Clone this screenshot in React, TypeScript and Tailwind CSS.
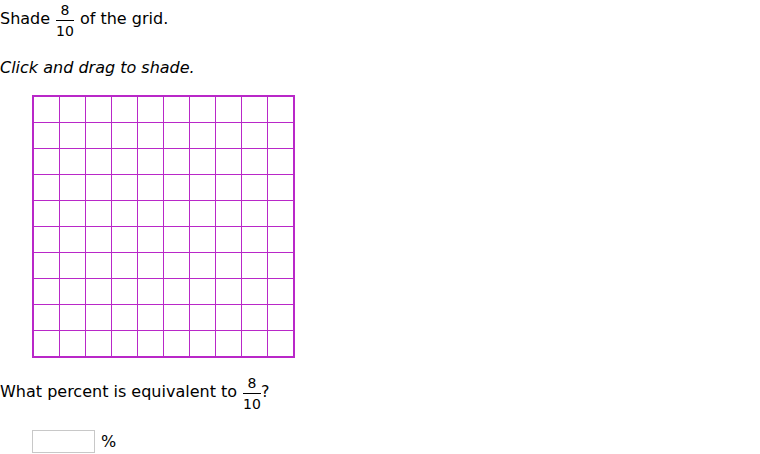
import { useState } from "react";

function Fraction({ top, bottom }: { top: number; bottom: number }) {
  return (
    <span className="inline-flex flex-col text-center text-sm leading-5">
      <span>{top}</span>
      <span className="border-t border-black">{bottom}</span>
    </span>
  );
}

const CELLS = Array.from({ length: 100 }, (_, i) => i);

export default function App() {
  const [shaded, setShaded] = useState<number[]>([]);
  const [answer, setAnswer] = useState("");

  const shade = (cell: number) =>
    setShaded((cells) =>
      cells.includes(cell) ? cells.filter((c) => c !== cell) : [...cells, cell],
    );

  return (
    <main className="bg-white font-['DejaVu_Sans',Verdana,sans-serif] text-base leading-5 text-black">
      <p className="flex items-start gap-1.5 leading-[38px]">
        Shade <Fraction top={8} bottom={10} /> of the grid.
      </p>
      <p className="mt-[17px] italic">Click and drag to shade.</p>
      <div className="mt-[17px] ml-8 grid w-fit auto-rows-[25px] grid-cols-[repeat(10,25px)] gap-px border-2 border-[#b928c8] bg-[#b928c8]">
        {CELLS.map((cell) => (
          <button
            key={cell}
            type="button"
            aria-label={`Square ${cell + 1}`}
            aria-pressed={shaded.includes(cell)}
            className={shaded.includes(cell) ? "bg-[#e3a9e9]" : "bg-white"}
            onMouseDown={() => shade(cell)}
            onMouseEnter={(e) => {
              if (e.buttons === 1) shade(cell);
            }}
          />
        ))}
      </div>
      <label htmlFor="percent" className="mt-[15px] flex items-start leading-[38px]">
        <span className="mr-1.5">What percent is equivalent to</span>
        <Fraction top={8} bottom={10} />?
      </label>
      <div className="mt-4 ml-8 flex items-center gap-1.5">
        <input
          id="percent"
          type="text"
          inputMode="numeric"
          value={answer}
          onChange={(e) => setAnswer(e.target.value)}
          className="h-[23px] w-[63px] border border-[#c8c8c8] bg-white px-1 outline-none focus:border-[#b928c8]"
        />
        <span>%</span>
      </div>
    </main>
  );
}
